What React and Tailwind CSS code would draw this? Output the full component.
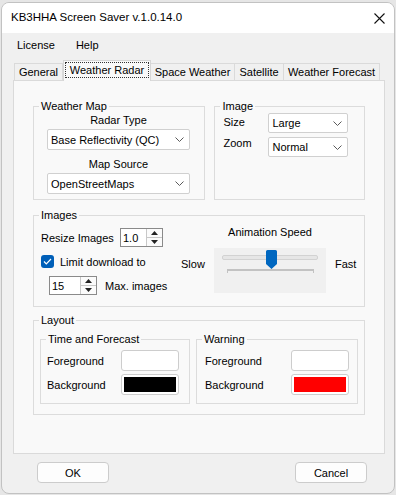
const font = { fontFamily: '"Liberation Sans", Arial, sans-serif' };

const Chevron = () => (
  <svg width="9" height="5" viewBox="0 0 9 5" className="shrink-0">
    <polyline points="0.5,0.5 4.5,4.5 8.5,0.5" fill="none" stroke="#5a5a5a" strokeWidth="1" />
  </svg>
);

const Combo = ({ value, className }) => (
  <div className={`flex items-center justify-between rounded-[2px] border border-[#d0d0d0] bg-white pl-[3px] pr-[5px] ${className}`}>
    <span className="leading-[14px]">{value}</span>
    <Chevron />
  </div>
);

const Arrow = ({ up }) => (
  <svg width="7" height="4" viewBox="0 0 7 4">
    <polygon points={up ? "3.5,0 7,4 0,4" : "0,0 7,0 3.5,4"} fill="#222" />
  </svg>
);

const Spinner = ({ value, className }) => (
  <div className={`flex h-[19px] border border-[#8a8a8a] bg-white ${className}`}>
    <span className="flex-1 pl-[2px] pt-[2px] leading-[14px]">{value}</span>
    <div className="flex w-[16px] flex-col border-l border-[#c8c8c8]">
      <div className="flex flex-1 items-center justify-center border-b border-[#c8c8c8] bg-[#fbfbfb]">
        <Arrow up />
      </div>
      <div className="flex flex-1 items-center justify-center bg-[#fbfbfb]">
        <Arrow />
      </div>
    </div>
  </div>
);

const Group = ({ title, className, children }) => (
  <fieldset className={`border border-[#dcdcdc] ${className}`}>
    <legend className="ml-[5px] px-[2px] leading-[12px]">{title}</legend>
    {children}
  </fieldset>
);

const ColorBox = ({ fill }) => (
  <div className="h-[21px] w-[58px] rounded-[3px] border border-[#cdcdcd] bg-white p-[2px]">
    <div className={`h-full w-full ${fill}`} />
  </div>
);

const tabs = [
  { label: "General", w: "w-[49px]" },
  { label: "Weather Radar", w: "w-[88px]", active: true },
  { label: "Space Weather", w: "w-[84px]" },
  { label: "Satellite", w: "w-[49px]" },
  { label: "Weather Forecast", w: "w-[96px]" },
];

export default function App() {
  return (
    <div className="h-[495px] w-[396px] bg-[#e6e6e6] pt-[2px] text-[11px] text-black" style={font}>
      <div className="ml-[1px] flex h-[492px] w-[394px] flex-col overflow-hidden rounded-[8px] border border-[#c2c2c2] bg-[#f0f0f0]">
        <div className="flex h-[30px] shrink-0 items-center justify-between bg-white pl-[9px] pr-[9px]">
          <span className="text-[11.5px]">KB3HHA Screen Saver v.1.0.14.0</span>
          <svg width="11" height="11" viewBox="0 0 11 11">
            <path d="M0.5 0.5 L10.5 10.5 M10.5 0.5 L0.5 10.5" stroke="#111" strokeWidth="1.1" />
          </svg>
        </div>

        <div className="flex h-[25px] shrink-0 items-center gap-[21px] pl-[15px]">
          <span>License</span>
          <span>Help</span>
        </div>

        <div className="flex h-[22px] shrink-0 items-end pl-[12px]">
          {tabs.map((t) =>
            t.active ? (
              <div
                key={t.label}
                className={`relative z-10 -mb-px flex h-[21px] items-start justify-center border border-b-0 border-[#d6d6d6] bg-[#f9f9f9] pt-[1px] ${t.w}`}
              >
                <span className="border border-dotted border-[#333] px-[4px] leading-[14px]">{t.label}</span>
              </div>
            ) : (
              <div
                key={t.label}
                className={`flex h-[17px] items-center justify-center border border-b-0 border-l-0 border-[#dadada] bg-[#f0f0f0] first:border-l ${t.w}`}
              >
                {t.label}
              </div>
            )
          )}
        </div>

        <div className="ml-[11px] flex h-[374px] w-[372px] shrink-0 flex-col border border-[#dadada] bg-[#f9f9f9] px-[19px] pt-[19px]">
          <div className="flex gap-[9px]">
            <Group title="Weather Map" className="h-[100px] w-[173px]">
              <div className="ml-[13px] flex w-[143px] flex-col items-center">
                <span className="mt-[1px] leading-[14px]">Radar Type</span>
                <Combo value="Base Reflectivity (QC)" className="mt-[2px] h-[21px] w-full" />
                <span className="mt-[7px] leading-[14px]">Map Source</span>
                <Combo value="OpenStreetMaps" className="mt-[2px] h-[21px] w-full" />
              </div>
            </Group>
            <Group title="Image" className="h-[100px] w-[151px]">
              <div className="flex flex-col gap-[4px] pl-[8px] pt-[1px]">
                <div className="flex items-start">
                  <span className="mt-[2px] w-[45px] leading-[14px]">Size</span>
                  <Combo value="Large" className="h-[20px] w-[80px]" />
                </div>
                <div className="flex items-start">
                  <span className="-mt-px w-[45px] leading-[14px]">Zoom</span>
                  <Combo value="Normal" className="h-[20px] w-[80px]" />
                </div>
              </div>
            </Group>
          </div>

          <Group title="Images" className="mt-[9px] flex h-[98px] w-[332px]">
            <div className="flex">
              <div className="flex w-[147px] flex-col pl-[7px] pt-[7px]">
                <div className="flex items-center">
                  <span className="w-[79px] leading-[14px]">Resize Images</span>
                  <Spinner value="1.0" className="w-[43px]" />
                </div>
                <div className="mt-[8px] flex h-[13px] items-center gap-[6px]">
                  <span className="flex h-[13px] w-[13px] items-center justify-center rounded-[3px] bg-[#005fb8]">
                    <svg width="9" height="7" viewBox="0 0 9 7">
                      <polyline points="1,3.5 3.3,5.8 8,1" fill="none" stroke="#fff" strokeWidth="1.2" />
                    </svg>
                  </span>
                  <span className="leading-[14px]">Limit download to</span>
                </div>
                <div className="mt-[8px] flex items-center gap-[8px] pl-[8px]">
                  <Spinner value="15" className="w-[48px]" />
                  <span className="leading-[14px]">Max. images</span>
                </div>
              </div>

              <div className="grid grid-cols-[33px_112px_auto] pt-[4px]">
                <span className="col-start-2 text-center leading-[14px]">Animation Speed</span>
                <span className="col-start-1 mt-[16px] leading-[14px]">Slow</span>
                <div className="mt-[7px] flex h-[45px] flex-col items-center bg-[#f0f0f0]">
                  <div className="relative mt-[7px] h-[5px] w-[96px] rounded-[2px] border border-[#d2d2d2] bg-[#e6e6e6]">
                    <svg className="absolute -top-[6px] left-[43px]" width="11" height="19" viewBox="0 0 11 19">
                      <path d="M1.5 0 H9.5 A1.5 1.5 0 0 1 11 1.5 V14 L5.5 19 L0 14 V1.5 A1.5 1.5 0 0 1 1.5 0 Z" fill="#0067c0" />
                    </svg>
                  </div>
                  <svg className="mt-[9px]" width="87" height="4" viewBox="0 0 87 4">
                    <rect x="0" y="0" width="87" height="2" fill="#c2c2c2" />
                    <rect x="0" y="0" width="1" height="4" fill="#c2c2c2" />
                    <rect x="86" y="0" width="1" height="4" fill="#c2c2c2" />
                  </svg>
                </div>
                <span className="mt-[16px] pl-[9px] leading-[14px]">Fast</span>
              </div>
            </div>
          </Group>

          <Group title="Layout" className="mt-[7px] h-[101px] w-[332px]">
            <div className="ml-[6px] mt-[7px] flex gap-[6px]">
              <Group title="Time and Forecast" className="h-[71px] w-[150px]">
                <div className="flex flex-col gap-[3px] pl-[6px] pt-[5px]">
                  <div className="flex items-center">
                    <span className="w-[74px] leading-[14px]">Foreground</span>
                    <ColorBox fill="bg-white" />
                  </div>
                  <div className="flex items-center">
                    <span className="w-[74px] leading-[14px]">Background</span>
                    <ColorBox fill="bg-black" />
                  </div>
                </div>
              </Group>
              <Group title="Warning" className="h-[71px] w-[162px]">
                <div className="flex flex-col gap-[3px] pl-[8px] pt-[5px]">
                  <div className="flex items-center">
                    <span className="w-[86px] leading-[14px]">Foreground</span>
                    <ColorBox fill="bg-white" />
                  </div>
                  <div className="flex items-center">
                    <span className="w-[86px] leading-[14px]">Background</span>
                    <ColorBox fill="bg-[#ff0000]" />
                  </div>
                </div>
              </Group>
            </div>
          </Group>
        </div>

        <div className="flex justify-between pl-[35px] pr-[27px] pt-[8px]">
          <button className="h-[21px] w-[72px] rounded-[4px] border border-[#cccccc] bg-[#fdfdfd] text-[11px] leading-[14px]">OK</button>
          <button className="h-[21px] w-[72px] rounded-[4px] border border-[#cccccc] bg-[#fdfdfd] text-[11px] leading-[14px]">Cancel</button>
        </div>
      </div>
    </div>
  );
}
